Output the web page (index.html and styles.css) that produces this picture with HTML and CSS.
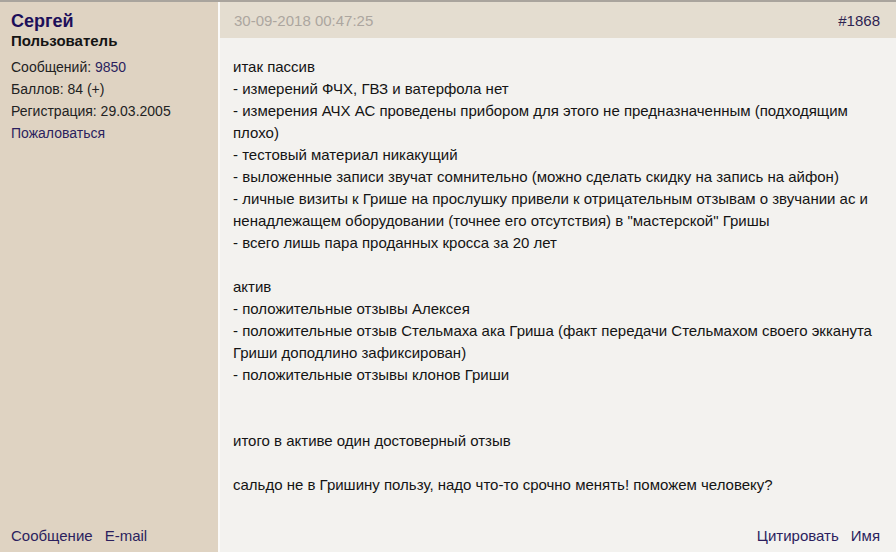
FILE: index.html
```html
<!DOCTYPE html>
<html lang="ru">
<head>
<meta charset="utf-8">
<link rel="stylesheet" href="styles.css">
</head>
<body>
<div class="post">
  <div class="author">
    <div class="name">Сергей</div>
    <div class="role">Пользователь</div>
    <div class="stats">
      <div>Сообщений: <a class="link" href="#">9850</a></div>
      <div>Баллов: 84 (+)</div>
      <div>Регистрация: 29.03.2005</div>
      <div><a class="link" href="#">Пожаловаться</a></div>
    </div>
    <div class="author-foot">
      <a class="link" href="#">Сообщение</a><a class="link" href="#">E-mail</a>
    </div>
  </div>
  <div class="main">
    <div class="head">
      <span class="date">30-09-2018 00:47:25</span>
      <a class="link num" href="#">#1868</a>
    </div>
    <div class="text">итак пассив<br>
- измерений ФЧХ, ГВЗ и ватерфола нет<br>
- измерения АЧХ АС проведены прибором для этого не предназначенным (подходящим плохо)<br>
- тестовый материал никакущий<br>
- выложенные записи звучат сомнительно (можно сделать скидку на запись на айфон)<br>
- личные визиты к Грише на прослушку привели к отрицательным отзывам о звучании ас и ненадлежащем оборудовании (точнее его отсутствия) в "мастерской" Гришы<br>
- всего лишь пара проданных кросса за 20 лет<br>
<br>
актив<br>
- положительные отзывы Алексея<br>
- положительные отзыв Стельмаха ака Гриша (факт передачи Стельмахом своего экканута Гриши доподлино зафиксирован)<br>
- положительные отзывы клонов Гриши<br>
<br>
<br>
итого в активе один достоверный отзыв<br>
<br>
сальдо не в Гришину пользу, надо что-то срочно менять! поможем человеку?</div>
    <div class="foot">
      <a class="link" href="#">Цитировать</a><a class="link" href="#">Имя</a>
    </div>
  </div>
</div>
</body>
</html>
```

FILE: styles.css
```css
html, body {
  margin: 0;
  padding: 0;
}
body {
  font-family: "Liberation Sans", Arial, sans-serif;
  font-size: 15px;
  color: #141414;
  background: #f3f2ef;
}
.post {
  display: grid;
  grid-template-columns: 218px 1fr;
  border-top: 2px solid #a9a49d;
  height: 550px;
}
.link {
  color: #2b1f5e;
  text-decoration: none;
}
.author {
  background: #dfd3c2;
  padding: 9px 11px 5px;
  display: flex;
  flex-direction: column;
}
.name {
  font-size: 18px;
  font-weight: bold;
  color: #1c0f5a;
  line-height: 20px;
}
.role {
  font-weight: bold;
  line-height: 20px;
}
.stats {
  margin-top: 5px;
  font-size: 14px;
  line-height: 22px;
  color: #222;
}
.author-foot {
  margin-top: auto;
  line-height: 22px;
  display: flex;
  gap: 12px;
}
.main {
  border-left: 2px solid #fbfaf8;
  display: flex;
  flex-direction: column;
}
.head {
  background: #e4ddd0;
  height: 36px;
  display: flex;
  justify-content: space-between;
  align-items: center;
  padding: 0 16px 0 14px;
}
.date {
  color: #aca69f;
}
.num {
  color: #2d2350;
}
.text {
  padding: 18px 14px 0 13px;
  line-height: 22px;
}
.foot {
  margin-top: auto;
  display: flex;
  justify-content: flex-end;
  gap: 12px;
  padding: 0 16px 5px;
  line-height: 22px;
}
```
